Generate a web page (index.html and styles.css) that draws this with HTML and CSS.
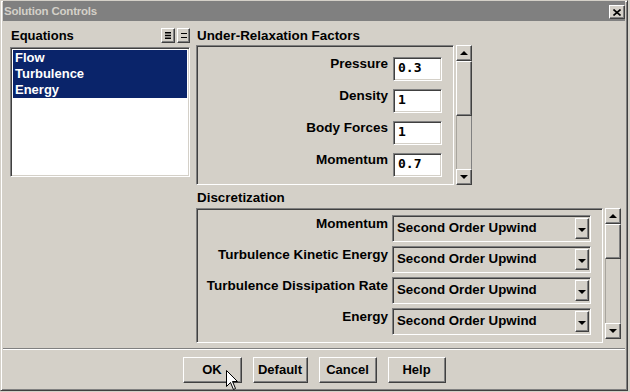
FILE: index.html
```html
<!DOCTYPE html>
<html lang="en">
<head>
    <meta charset="UTF-8">
    <title>Solution Controls</title>
    <link rel="stylesheet" href="styles.css">
</head>
<body>
    <div class="window">
        <div class="titlebar">
            <span class="title">Solution Controls</span>
            <span class="close">
                <svg width="8" height="7" viewBox="0 0 8 7"><path d="M0.5 0.5 L7.5 6.5 M7.5 0.5 L0.5 6.5" stroke="#000" stroke-width="1.6"/></svg>
            </span>
        </div>

        <div class="main">
            <div class="left">
                <div class="head">
                    <span class="label">Equations</span>
                    <span class="tools">
                        <span class="tool wide">
                            <svg width="6" height="7" viewBox="0 0 6 7"><rect x="0" y="0" width="6" height="1.5"/><rect x="0" y="2.75" width="6" height="1.5"/><rect x="0" y="5.5" width="6" height="1.5"/></svg>
                        </span>
                        <span class="tool">
                            <svg width="6" height="5" viewBox="0 0 6 5"><rect x="0" y="0" width="6" height="1"/><rect x="0" y="4" width="6" height="1"/></svg>
                        </span>
                    </span>
                </div>
                <ul class="listbox">
                    <li class="selected">Flow</li>
                    <li class="selected">Turbulence</li>
                    <li class="selected">Energy</li>
                </ul>
            </div>

            <div class="right">
                <div class="label section-title">Under-Relaxation Factors</div>
                <div class="group">
                    <div class="panel relax">
                        <div class="row"><span class="name">Pressure</span><span class="field">0.3</span></div>
                        <div class="row"><span class="name">Density</span><span class="field">1</span></div>
                        <div class="row"><span class="name">Body Forces</span><span class="field">1</span></div>
                        <div class="row"><span class="name">Momentum</span><span class="field">0.7</span></div>
                    </div>
                    <div class="scrollbar tall">
                        <span class="sb-btn"><span class="tri up"></span></span>
                        <span class="thumb"></span>
                        <span class="track"></span>
                        <span class="sb-btn"><span class="tri down"></span></span>
                    </div>
                </div>

                <div class="label section-title second">Discretization</div>
                <div class="group">
                    <div class="panel discret">
                        <div class="row"><span class="name">Momentum</span><span class="combo"><span class="value">Second Order Upwind</span><span class="drop"><span class="tri down"></span></span></span></div>
                        <div class="row"><span class="name">Turbulence Kinetic Energy</span><span class="combo"><span class="value">Second Order Upwind</span><span class="drop"><span class="tri down"></span></span></span></div>
                        <div class="row"><span class="name">Turbulence Dissipation Rate</span><span class="combo"><span class="value">Second Order Upwind</span><span class="drop"><span class="tri down"></span></span></span></div>
                        <div class="row"><span class="name">Energy</span><span class="combo"><span class="value">Second Order Upwind</span><span class="drop"><span class="tri down"></span></span></span></div>
                    </div>
                    <div class="scrollbar short">
                        <span class="sb-btn"><span class="tri up"></span></span>
                        <span class="thumb"></span>
                        <span class="track"></span>
                        <span class="sb-btn"><span class="tri down"></span></span>
                    </div>
                </div>
            </div>
        </div>

        <div class="separator"></div>

        <div class="buttons">
            <span class="btn ok">OK</span>
            <span class="btn default">Default</span>
            <span class="btn cancel">Cancel</span>
            <span class="btn help">Help</span>
        </div>

        <svg class="cursor" width="13" height="21" viewBox="0 0 13 21">
            <path d="M0.5 0.5 L0.5 16.5 L4.5 12.5 L7.5 19.5 L9.5 18.5 L6.5 11.5 L11.5 11.5 Z" fill="#fff" stroke="#000" stroke-width="1"/>
        </svg>
    </div>
</body>
</html>
```

FILE: styles.css
```css
body {
    margin: 0;
    background: #d4d0c8;
    font-family: "Liberation Sans", Arial, sans-serif;
    font-size: 13px;
    font-weight: bold;
    color: #000;
}
.window {
    position: relative;
    width: 628px;
    height: 391px;
    box-sizing: border-box;
    border: 1px solid;
    border-color: #d4d0c8 #404040 #404040 #d4d0c8;
    box-shadow: inset 1px 1px #fff, inset -1px -1px #808080;
    padding: 0 2px 2px 2px;
    display: flex;
    flex-direction: column;
}
.titlebar {
    height: 20px;
    background: #808080;
    display: flex;
    align-items: flex-start;
    justify-content: space-between;
}
.title {
    font-size: 11.5px;
    line-height: 21px;
    color: #d4d0c8;
    padding-left: 1px;
    letter-spacing: -0.2px;
}
.close, .tool, .sb-btn, .thumb, .drop, .btn {
    box-sizing: border-box;
    background: #d4d0c8;
    border: 1px solid;
    border-color: #fff #404040 #404040 #fff;
    box-shadow: inset -1px -1px #808080;
    display: flex;
    align-items: center;
    justify-content: center;
}
.close {
    width: 16px;
    height: 14px;
    margin: 4px 0 0 0;
}
.main {
    display: flex;
    padding: 7px 0 0 7px;
}
.left {
    width: 180px;
}
.head {
    height: 16px;
    display: flex;
    justify-content: space-between;
}
.label {
    line-height: 16px;
    padding-left: 1px;
}
.tools {
    display: flex;
    gap: 2px;
}
.tool {
    width: 13px;
    height: 15px;
}
.tool.wide {
    width: 14px;
}
.listbox, .field, .combo, .panel {
    box-sizing: border-box;
    border: 1px solid;
    border-color: #808080 #fff #fff #808080;
    box-shadow: inset 1px 1px #404040, inset -1px -1px #d4d0c8;
}
.listbox {
    list-style: none;
    margin: 3px 0 0 0;
    padding: 2px;
    height: 130px;
    background: #fff;
}
.listbox li {
    line-height: 16px;
    padding-left: 2px;
}
.listbox .selected {
    background: #0a246a;
    color: #fff;
}
.right {
    margin-left: 6px;
    width: 425px;
}
.section-title {
    margin-bottom: 1px;
    font-size: 13.4px;
}
.section-title.second {
    margin-top: 5px;
    margin-bottom: 2px;
}
.group {
    display: flex;
    align-items: flex-start;
}
.panel {
    display: flex;
    flex-direction: column;
}
.relax {
    width: 258px;
    height: 140px;
    padding: 11px 11px 0 0;
    gap: 8px;
}
.discret {
    width: 407px;
    height: 135px;
    padding: 6px 11px 0 0;
    gap: 4px;
}
.row {
    display: flex;
    justify-content: flex-end;
    align-items: flex-start;
}
.name {
    font-size: 13.5px;
}
.relax .name {
    margin: -1px 5px 0 0;
    line-height: 16px;
}
.discret .name {
    margin: 1px 4px 0 0;
    line-height: 16px;
}
.field {
    width: 49px;
    height: 24px;
    background: #fff;
    padding: 2px 0 0 4px;
    font-family: "DejaVu Sans Mono", "Liberation Mono", monospace;
    font-size: 13px;
    line-height: 16px;
}
.combo {
    width: 199px;
    height: 27px;
    display: flex;
    align-items: center;
    justify-content: space-between;
    padding: 0 1px 0 4px;
    background: #d4d0c8;
}
.value {
    font-size: 13.3px;
    line-height: 16px;
    margin-top: -1px;
}
.drop {
    width: 14px;
    height: 21px;
    padding-top: 3px;
}
.scrollbar {
    width: 16px;
    margin-left: 2px;
    display: flex;
    flex-direction: column;
}
.scrollbar.tall {
    height: 140px;
}
.scrollbar.short {
    height: 131px;
}
.sb-btn {
    height: 16px;
}
.tall .thumb {
    height: 55px;
}
.short .thumb {
    height: 35px;
}
.track {
    flex: 1;
    border-left: 1px solid #a8a59e;
    border-right: 1px solid #808080;
}
.tri {
    width: 0;
    height: 0;
    border-left: 4px solid transparent;
    border-right: 4px solid transparent;
}
.tri.up {
    border-bottom: 4px solid #000;
}
.tri.down {
    border-top: 4px solid #000;
}
.separator {
    margin-top: 5px;
    height: 0;
    border-top: 1px solid #808080;
    border-bottom: 1px solid #fff;
}
.buttons {
    display: flex;
    justify-content: center;
    gap: 11px;
    margin-top: 7px;
}
.btn {
    height: 26px;
    line-height: 16px;
}
.ok {
    width: 59px;
}
.default {
    width: 55px;
}
.cancel {
    width: 58px;
}
.help {
    width: 58px;
}
.cursor {
    position: absolute;
    left: 225px;
    top: 369px;
}
```
